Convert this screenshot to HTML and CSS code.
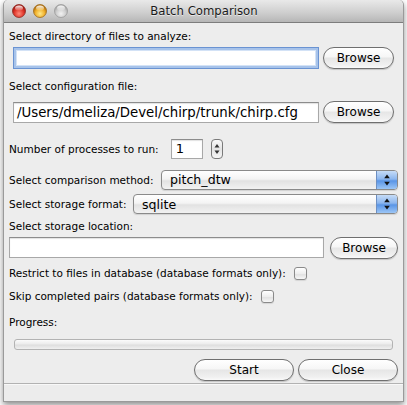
FILE: index.html
```html
<!DOCTYPE html>
<html>
<head>
<meta charset="utf-8">
<title>Batch Comparison</title>
<link rel="stylesheet" href="styles.css">
</head>
<body>
<div class="window">
  <div class="titlebar">
    <div class="lights">
      <svg class="light" viewBox="0 0 14 14" width="14" height="14">
        <defs>
          <radialGradient id="gr" cx="50%" cy="70%" r="60%">
            <stop offset="0" stop-color="#ff8a7a"/>
            <stop offset="0.6" stop-color="#e0382c"/>
            <stop offset="1" stop-color="#a8150e"/>
          </radialGradient>
          <radialGradient id="go" cx="50%" cy="70%" r="60%">
            <stop offset="0" stop-color="#ffe98a"/>
            <stop offset="0.6" stop-color="#f0b12c"/>
            <stop offset="1" stop-color="#b5700a"/>
          </radialGradient>
          <radialGradient id="gg" cx="50%" cy="70%" r="60%">
            <stop offset="0" stop-color="#f2f2f2"/>
            <stop offset="0.6" stop-color="#cfcfcf"/>
            <stop offset="1" stop-color="#a8a8a8"/>
          </radialGradient>
          <linearGradient id="hl" x1="0" y1="0" x2="0" y2="1">
            <stop offset="0" stop-color="#fff" stop-opacity="0.95"/>
            <stop offset="1" stop-color="#fff" stop-opacity="0.1"/>
          </linearGradient>
        </defs>
        <circle cx="7" cy="7" r="6.5" fill="url(#gr)" stroke="#8c2a22" stroke-width="0.8"/>
        <ellipse cx="7" cy="4" rx="4" ry="2.6" fill="url(#hl)"/>
      </svg>
      <svg class="light" viewBox="0 0 14 14" width="14" height="14">
        <circle cx="7" cy="7" r="6.5" fill="url(#go)" stroke="#9c6a1a" stroke-width="0.8"/>
        <ellipse cx="7" cy="4" rx="4" ry="2.6" fill="url(#hl)"/>
      </svg>
      <svg class="light" viewBox="0 0 14 14" width="14" height="14">
        <circle cx="7" cy="7" r="6.5" fill="url(#gg)" stroke="#9a9a9a" stroke-width="0.8"/>
        <ellipse cx="7" cy="4" rx="4" ry="2.6" fill="url(#hl)"/>
      </svg>
    </div>
    <div class="title">Batch Comparison</div>
  </div>

  <div class="content">
    <div class="label l1">Select directory of files to analyze:</div>
    <div class="row r1">
      <div class="field focus"></div>
      <div class="btn browse">Browse</div>
    </div>

    <div class="label l2">Select configuration file:</div>
    <div class="row r2">
      <div class="field path">/Users/dmeliza/Devel/chirp/trunk/chirp.cfg</div>
      <div class="btn browse">Browse</div>
    </div>

    <div class="row r-proc">
      <span class="text">Number of processes to run:</span>
      <div class="field num">1</div>
      <div class="stepper">
        <svg viewBox="0 0 12 20" width="12" height="20">
          <path d="M6 5 L8.5 8.5 L3.5 8.5 Z" fill="#333"/>
          <path d="M6 15 L8.5 11.5 L3.5 11.5 Z" fill="#333"/>
        </svg>
      </div>
    </div>

    <div class="row r-method">
      <span class="text">Select comparison method:</span>
      <div class="select method">
        <span class="sel-text">pitch_dtw</span>
        <span class="sel-arrow">
          <svg viewBox="0 0 20 20" width="20" height="20">
            <path d="M10 4.5 L12.8 8.3 L7.2 8.3 Z" fill="#111"/>
            <path d="M10 15.5 L12.8 11.7 L7.2 11.7 Z" fill="#111"/>
          </svg>
        </span>
      </div>
    </div>

    <div class="row r-format">
      <span class="text">Select storage format:</span>
      <div class="select format">
        <span class="sel-text">sqlite</span>
        <span class="sel-arrow">
          <svg viewBox="0 0 20 20" width="20" height="20">
            <path d="M10 4.5 L12.8 8.3 L7.2 8.3 Z" fill="#111"/>
            <path d="M10 15.5 L12.8 11.7 L7.2 11.7 Z" fill="#111"/>
          </svg>
        </span>
      </div>
    </div>

    <div class="label l3">Select storage location:</div>
    <div class="row r3">
      <div class="field loc"></div>
      <div class="btn browse b3">Browse</div>
    </div>

    <div class="row r-check1">
      <span class="text">Restrict to files in database (database formats only):</span>
      <span class="check"></span>
    </div>
    <div class="row r-check2">
      <span class="text">Skip completed pairs (database formats only):</span>
      <span class="check"></span>
    </div>

    <div class="label l4">Progress:</div>
    <div class="progress"></div>

    <div class="row r-actions">
      <div class="btn action">Start</div>
      <div class="btn action">Close</div>
    </div>
  </div>
  <div class="footer"></div>
</div>
</body>
</html>
```

FILE: styles.css
```css
html, body {
  margin: 0;
  padding: 0;
  background: #ffffff;
}

body {
  width: 407px;
  height: 405px;
  overflow: hidden;
  font-family: "DejaVu Sans", sans-serif;
  color: #000;
}

.window {
  margin-left: 3px;
  width: 401px;
  height: 402px;
  box-sizing: border-box;
  border: 1px solid #9a9a9a;
  border-top: none;
  border-radius: 5px 5px 0 0;
  background: #ededed;
  box-shadow: 0 3px 6px rgba(0, 0, 0, 0.45);
  display: flex;
  flex-direction: column;
  overflow: hidden;
}

.titlebar {
  height: 22px;
  flex: none;
  position: relative;
  background: linear-gradient(#e9e9e9, #cdcdcd 60%, #b6b6b6);
  border-bottom: 1px solid #7d7d7d;
  border-radius: 5px 5px 0 0;
  display: flex;
  align-items: center;
  justify-content: center;
}

.lights {
  position: absolute;
  left: 8px;
  top: 4px;
  display: flex;
  gap: 7px;
}

.light {
  display: block;
}

.title {
  font-size: 11.7px;
  color: #1a1a1a;
  text-shadow: 0 1px 0 rgba(255, 255, 255, 0.6);
  padding-left: 1px;
}

.content {
  flex: 1;
  padding: 0 5px 0 5px;
  display: flex;
  flex-direction: column;
  font-size: 10.5px;
}

.label {
  height: 14px;
  line-height: 14px;
}

.l1 { margin-top: 6px; }
.l2 { margin-top: 9px; }
.l3 { margin-top: 5px; }
.l4 { margin-top: 11px; }

.row {
  display: flex;
  align-items: center;
}

.text {
  white-space: nowrap;
}

.field {
  box-sizing: border-box;
  background: #fff;
  border: 1px solid #a8a8a8;
  border-top-color: #8c8c8c;
  box-shadow: inset 0 1px 1px rgba(0, 0, 0, 0.12);
}

.r1 {
  margin-top: 3px;
  height: 24px;
  padding-left: 4px;
}

.r1 .field {
  width: 306px;
  height: 22px;
}

.field.focus {
  border: 1px solid #6a93d2;
  box-shadow: inset 0 0 0 2px #a7c3ea, inset 0 0 0 3px #d3e2f6;
}

.r2 {
  margin-top: 8px;
  height: 22px;
  padding-left: 4px;
}

.field.path {
  width: 306px;
  height: 21px;
  font-size: 13.3px;
  line-height: 19px;
  padding-left: 3px;
  white-space: nowrap;
  overflow: hidden;
}

.btn {
  box-sizing: border-box;
  height: 22px;
  border: 1px solid #6f6f6f;
  border-radius: 11px;
  background: linear-gradient(#ffffff, #f6f6f6 45%, #e6e6e6 50%, #f0f0f0 85%, #fafafa);
  box-shadow: 0 1px 1px rgba(0, 0, 0, 0.18);
  display: flex;
  align-items: center;
  justify-content: center;
  font-size: 12px;
}

.browse {
  width: 71px;
  margin-left: 4px;
}

.r-proc {
  margin-top: 15px;
  height: 22px;
}

.field.num {
  margin-left: 12px;
  width: 32px;
  height: 20px;
  font-size: 13px;
  line-height: 18px;
  padding-left: 4px;
}

.stepper {
  margin-left: 8px;
  width: 12px;
  height: 20px;
  box-sizing: border-box;
  border: 1px solid #7a7a7a;
  border-radius: 4px;
  background: linear-gradient(#fafafa, #e4e4e4 50%, #f5f5f5);
  display: flex;
  align-items: center;
  justify-content: center;
  overflow: hidden;
}

.stepper svg {
  display: block;
  flex: none;
}

.r-method {
  margin-top: 9px;
  height: 21px;
  justify-content: space-between;
}

.r-format {
  margin-top: 4px;
  height: 20px;
  justify-content: space-between;
}

.select {
  box-sizing: border-box;
  height: 20px;
  border: 1px solid #8a8a8a;
  border-radius: 4px;
  background: linear-gradient(#ffffff, #f4f4f4 45%, #e2e2e2 55%, #f2f2f2);
  box-shadow: 0 1px 1px rgba(0, 0, 0, 0.12);
  display: flex;
  align-items: center;
  overflow: hidden;
}

.select.method { width: 237px; }
.select.format { width: 265px; }

.sel-text {
  flex: 1;
  font-size: 12.6px;
  padding-left: 8px;
}

.sel-arrow {
  width: 20px;
  height: 18px;
  border-left: 1px solid #6d8fc2;
  background: linear-gradient(#c6dcf7, #8cb6ee 45%, #5a95e6 55%, #9cc6f6);
  display: flex;
  align-items: center;
  justify-content: center;
}

.sel-arrow svg { display: block; }

.r3 {
  margin-top: 3px;
  height: 23px;
}

.field.loc {
  width: 315px;
  height: 21px;
}

.browse.b3 {
  width: 68px;
  margin-left: 6px;
}

.r-check1 {
  margin-top: 6px;
  height: 16px;
}

.r-check2 {
  margin-top: 7px;
  height: 16px;
}

.check {
  margin-left: 8px;
  width: 13px;
  height: 13px;
  box-sizing: border-box;
  border: 1px solid #8a8a8a;
  border-radius: 3px;
  background: linear-gradient(#ffffff, #eeeeee 50%, #e2e2e2 60%, #f7f7f7);
  box-shadow: 0 1px 1px rgba(0, 0, 0, 0.1);
}

.progress {
  margin-top: 10px;
  margin-left: 5px;
  width: 379px;
  height: 11px;
  box-sizing: border-box;
  border: 1px solid #b3b3b3;
  border-radius: 3px;
  background: linear-gradient(#fbfbfb, #ececec 45%, #dedede 55%, #f0f0f0);
}

.r-actions {
  margin-top: 9px;
  height: 22px;
  justify-content: flex-end;
  gap: 4px;
}

.action {
  width: 100px;
}

.footer {
  flex: none;
  height: 17px;
  border-top: 1px solid #b2b2b2;
  box-shadow: inset 0 1px 0 #f8f8f8;
  background: #ececec;
}
```
